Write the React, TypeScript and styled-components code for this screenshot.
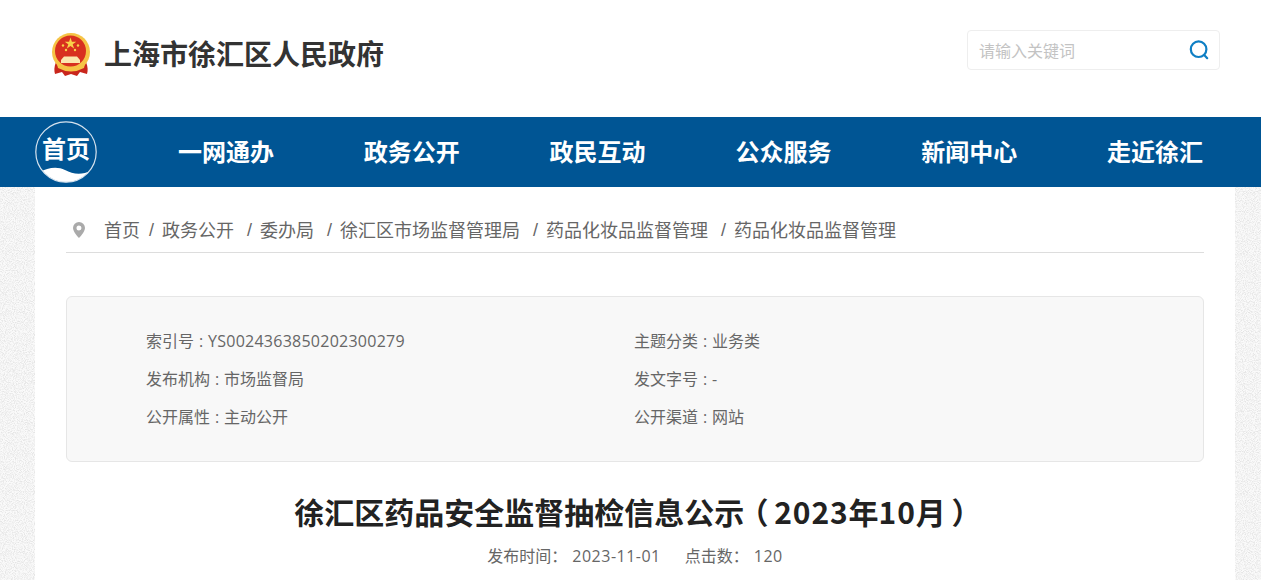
import styled, { createGlobalStyle } from 'styled-components'

const noise = `url("data:image/svg+xml,%3Csvg xmlns='http://www.w3.org/2000/svg' width='240' height='240'%3E%3Cfilter id='n' x='0' y='0' width='100%25' height='100%25'%3E%3CfeTurbulence type='fractalNoise' baseFrequency='1.1' numOctaves='1' stitchTiles='stitch'/%3E%3CfeColorMatrix values='0 0 0 0 0.78 0 0 0 0 0.78 0 0 0 0 0.78 3 0 0 0 -1.2'/%3E%3C/filter%3E%3Crect width='240' height='240' fill='%23fafafa'/%3E%3Crect width='240' height='240' filter='url(%23n)'/%3E%3C/svg%3E")`

const GlobalStyle = createGlobalStyle`
  * {
    box-sizing: border-box;
  }

  html, body {
    margin: 0;
    padding: 0;
    height: 580px;
    overflow: hidden;
    background: #fff;
    font-family: "Open Sans", "Noto Sans CJK SC", sans-serif;
  }
`

const Header = styled.header`
  height: 117px;
  display: flex;
  align-items: center;
  justify-content: space-between;
  padding: 0 41px 8px 50px;
  background: #fff;
`

const Brand = styled.div`
  display: flex;
  align-items: center;
  gap: 12px;
`

const SiteName = styled.h1`
  margin: 0;
  padding-top: 3px;
  font-family: "Liberation Sans", "Noto Sans CJK SC", sans-serif;
  font-size: 28px;
  font-weight: 700;
  line-height: 40px;
  color: #333;
`

const Search = styled.div`
  width: 253px;
  height: 40px;
  border: 1px solid #eee;
  border-radius: 4px;
  display: flex;
  align-items: center;
  justify-content: space-between;
  padding: 0 10px 0 11px;
  margin-bottom: 9px;
  font-size: 16px;
  color: #c3c3c3;
`

const Nav = styled.nav`
  height: 70px;
  background: #005594;
  display: flex;
  align-items: center;
  padding: 0 58px 0 35px;
  font-family: "Liberation Sans", "Noto Sans CJK SC", sans-serif;
`

const HomeBadge = styled.div`
  width: 62px;
  height: 62px;
  flex: none;
  position: relative;
  margin-top: -1px;
  display: flex;
  justify-content: center;
  padding-top: 15px;
  color: #fff;
  font-size: 24px;
  font-weight: 700;
  line-height: 28px;
`

const BadgeArt = styled.svg`
  position: absolute;
  inset: 0;
`

const BadgeLabel = styled.span`
  position: relative;
`

const NavList = styled.div`
  flex: 1;
  display: flex;
  justify-content: space-between;
  padding: 1px 0 0 81px;
`

const NavItem = styled.a`
  color: #fff;
  font-size: 24px;
  font-weight: 700;
  line-height: 30px;
`

const Page = styled.div`
  height: 393px;
  padding: 0 26px 0 35px;
  background-image: ${noise};
  overflow: hidden;
`

const Sheet = styled.main`
  height: 100%;
  background: #fff;
  padding: 0 31px;
`

const Crumbs = styled.div`
  height: 66px;
  border-bottom: 1px solid #ddd;
  display: flex;
  align-items: center;
  padding: 20px 0 0 6px;
  font-size: 18px;
  line-height: 24px;
  color: #666;
  white-space: pre;
`

const PinIcon = styled.svg`
  margin-right: 18px;
`

const Crumb = styled.a`
  color: #666;
`

const Slash = styled.span<{ $wide?: boolean }>`
  margin: 0 8px 0 ${p => (p.$wide ? '13px' : '9px')};
  font-family: "Liberation Sans", sans-serif;
`

const InfoBox = styled.section`
  margin-top: 43px;
  height: 166px;
  background: #f8f8f8;
  border: 1px solid #e6e6e6;
  border-radius: 6px;
  padding: 25px 0 0 79px;
  display: grid;
  grid-template-columns: 488px 1fr;
  grid-auto-rows: 38px;
  font-size: 16px;
  line-height: 38px;
  word-spacing: 0.75px;
  color: #666;
`

const Num = styled.span`
  letter-spacing: 0.25px;
`

const Title = styled.h2`
  margin: 27px 0 0;
  display: flex;
  justify-content: center;
  font-family: "Noto Sans CJK SC", sans-serif;
  font-size: 30px;
  line-height: 44px;
  font-weight: 700;
  color: #222;
`

const TitleDigits = styled.span`
  letter-spacing: 0.9px;
`

/* palt drops the blank half of the full-width bracket, the padding centres what is left */
const TitleParen = styled.span<{ $side: 'left' | 'right' }>`
  width: 30px;
  padding-left: ${p => (p.$side === 'left' ? '8px' : '7px')};
  font-feature-settings: "palt";
`

const Meta = styled.div`
  margin-top: 11px;
  display: flex;
  justify-content: center;
  gap: 24px;
  font-size: 16px;
  line-height: 24px;
  color: #666;
`

const MetaValue = styled.span`
  margin-left: 5px;
  letter-spacing: 0.5px;
`

const navItems = ['一网通办', '政务公开', '政民互动', '公众服务', '新闻中心', '走近徐汇']

const Emblem = () => (
  <svg width="42" height="44" viewBox="0 0 42 44">
    <path d="M6 29 C4 34 4 38 5 41 L12 39 L15 43 L21 41 L27 43 L30 39 L37 41 C38 38 38 34 36 29 Z" fill="#c9261c" />
    <circle cx="21" cy="19" r="19" fill="#f6c445" />
    <circle cx="20.5" cy="18" r="15.5" fill="#d8301f" />
    <path d="M20.5 4.5 l1.4 4.2 h4.4 l-3.6 2.6 1.4 4.2-3.6-2.6-3.6 2.6 1.4-4.2-3.6-2.6 h4.4z" fill="#f8d24a" />
    <circle cx="13" cy="12.5" r="1.2" fill="#f8d24a" />
    <circle cx="28" cy="12.5" r="1.2" fill="#f8d24a" />
    <circle cx="16" cy="17" r="1.2" fill="#f8d24a" />
    <circle cx="25" cy="17" r="1.2" fill="#f8d24a" />
    <path d="M11 30 V27 L14 23.5 H27 L30 27 V30 Z" fill="#fbe7ad" />
    <path d="M7 31 Q21 39 35 31 L34 35 Q21 42 8 35 Z" fill="#f6c445" />
  </svg>
)

const SearchIcon = () => (
  <svg width="20" height="20" viewBox="0 0 20 20" fill="none" stroke="#0f7fc4" strokeWidth="2.2">
    <circle cx="9.6" cy="9.2" r="7.8" />
    <path d="M15.2 15 L18.2 18.2" strokeLinecap="round" />
  </svg>
)

export default function App() {
  return (
    <>
      <GlobalStyle />
      <Header>
        <Brand>
          <Emblem />
          <SiteName>上海市徐汇区人民政府</SiteName>
        </Brand>
        <Search>
          <span>请输入关键词</span>
          <SearchIcon />
        </Search>
      </Header>
      <Nav>
        <HomeBadge>
          <BadgeArt width="62" height="62" viewBox="0 0 62 62">
            <defs>
              <clipPath id="badge">
                <circle cx="31" cy="31" r="30.2" />
              </clipPath>
            </defs>
            <path clipPath="url(#badge)" d="M5 51 C12 47 22 45 30 49 C38 53 46 55 57 49 V62 H5 Z" fill="#fff" />
            <circle cx="31" cy="31" r="30.2" fill="none" stroke="#d6e3ee" strokeWidth="1.2" />
          </BadgeArt>
          <BadgeLabel>首页</BadgeLabel>
        </HomeBadge>
        <NavList>
          {navItems.map(item => <NavItem key={item}>{item}</NavItem>)}
        </NavList>
      </Nav>
      <Page>
        <Sheet>
          <Crumbs>
            <PinIcon width="14" height="18" viewBox="0 0 14 18">
              <path fillRule="evenodd" fill="#aaa" d="M7 1 a6 6 0 0 1 6 6 c0 4-6 10-6 10 S1 11 1 7 a6 6 0 0 1 6-6z M7 4.5 a2.5 2.5 0 1 0 0 5 a2.5 2.5 0 0 0 0-5z" />
            </PinIcon>
            <Crumb>首页</Crumb><Slash>/</Slash>
            <Crumb>政务公开</Crumb><Slash $wide>/</Slash>
            <Crumb>委办局</Crumb><Slash $wide>/</Slash>
            <Crumb>徐汇区市场监督管理局</Crumb><Slash $wide>/</Slash>
            <Crumb>药品化妆品监督管理</Crumb><Slash $wide>/</Slash>
            <Crumb>药品化妆品监督管理</Crumb>
          </Crumbs>
          <InfoBox>
            <div>索引号 : <Num>YS0024363850202300279</Num></div>
            <div>主题分类 : 业务类</div>
            <div>发布机构 : 市场监督局</div>
            <div>发文字号 : -</div>
            <div>公开属性 : 主动公开</div>
            <div>公开渠道 : 网站</div>
          </InfoBox>
          <Title>
            徐汇区药品安全监督抽检信息公示
            <TitleParen $side="left">（</TitleParen>
            <TitleDigits>2023</TitleDigits>年<TitleDigits>10</TitleDigits>月
            <TitleParen $side="right">）</TitleParen>
          </Title>
          <Meta>
            <span>发布时间：<MetaValue>2023-11-01</MetaValue></span>
            <span>点击数：<MetaValue>120</MetaValue></span>
          </Meta>
        </Sheet>
      </Page>
    </>
  )
}
